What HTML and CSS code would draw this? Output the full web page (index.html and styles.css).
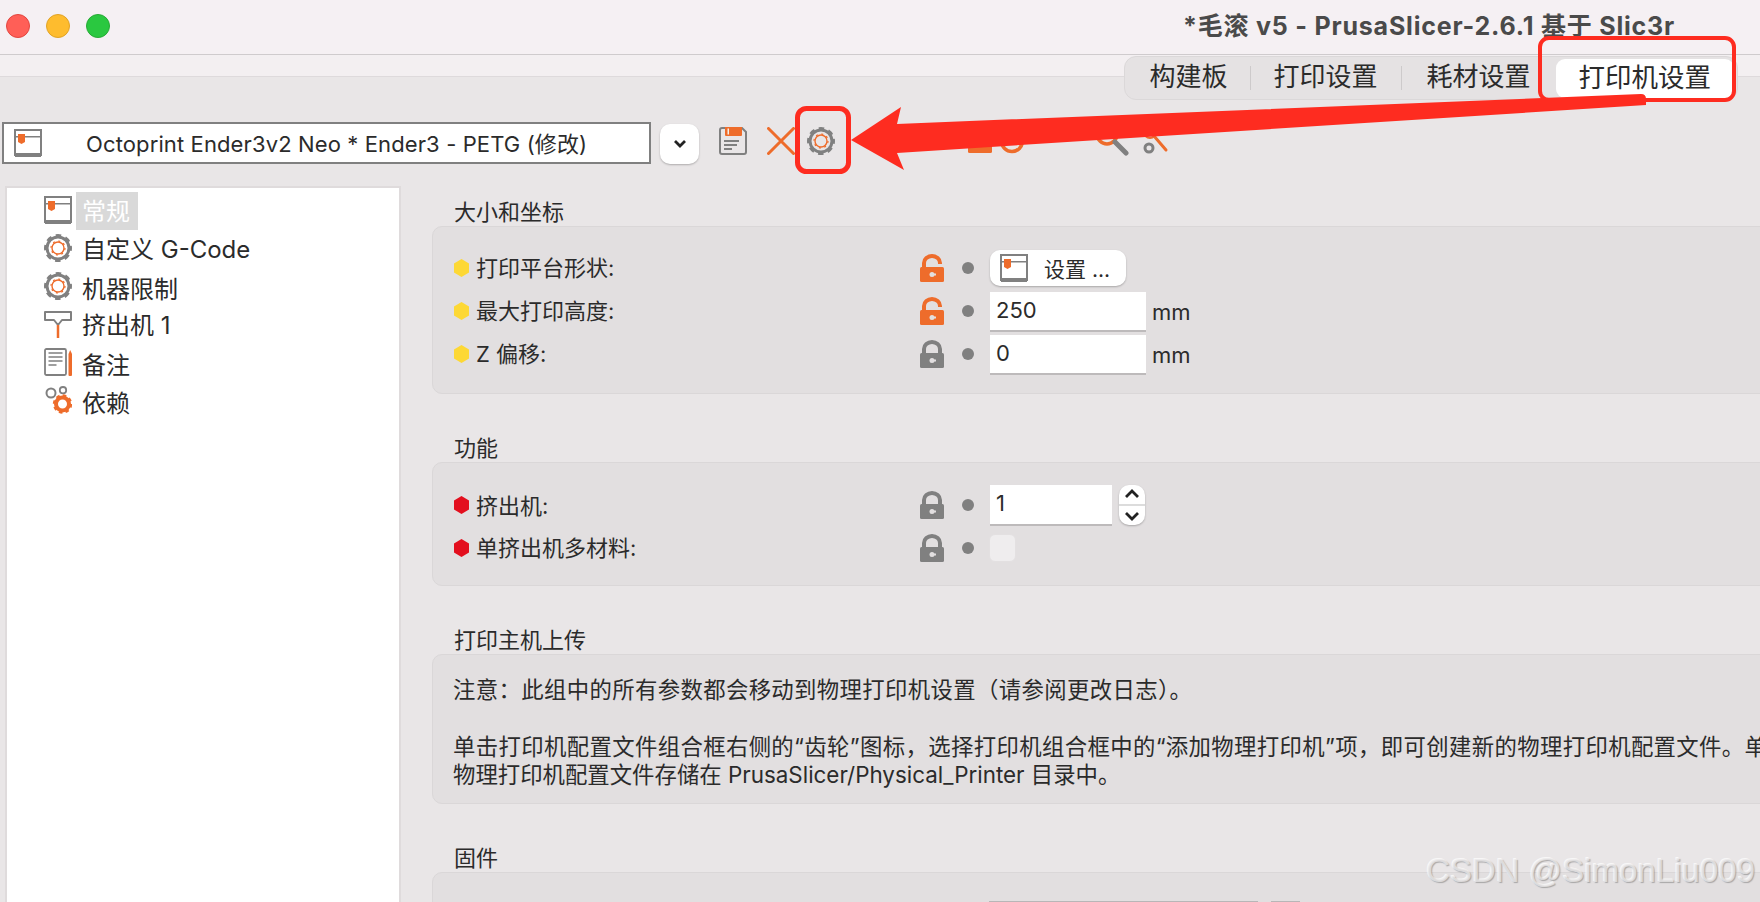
FILE: index.html
```html
<!DOCTYPE html>
<html lang="zh-CN">
<head>
    <meta charset="UTF-8">
    <title>PrusaSlicer</title>
    <link rel="stylesheet" href="styles.css">
</head>
<body>
    <svg class="sprite" width="0" height="0">
        <symbol id="i-printer" viewBox="0 0 28 28">
            <rect x="1" y="1" width="26" height="25" fill="none" stroke="#808080" stroke-width="2"/>
            <path d="M1 24h26v4H1zM2 7h25v1.500H2z" fill="#808080"/>
            <path d="M4 5h7v8l-3.500 2L4 13z" fill="#ee6c2b"/>
        </symbol>
        <symbol id="i-gear" viewBox="0 0 28 28">
            <circle cx="14" cy="14" r="11" fill="none" stroke="#808080" stroke-width="3"/>
            <circle cx="14" cy="14" r="12.700" fill="none" stroke="#808080" stroke-width="2.600" stroke-dasharray="5.500 4.480" stroke-dashoffset="2.700"/>
            <circle cx="14" cy="14" r="6" fill="none" stroke="#ee6c2b" stroke-width="1.400"/>
            <circle cx="14" cy="14" r="7" fill="none" stroke="#ee6c2b" stroke-width="1.200" stroke-dasharray="2 3.500"/>
        </symbol>
        <symbol id="i-extruder" viewBox="0 0 28 28">
            <path d="M1 2h26v8H18l-4 5-4-5H1z" fill="none" stroke="#808080" stroke-width="2" stroke-linejoin="round"/>
            <path d="M14 15v13" stroke="#ee6c2b" stroke-width="2.500"/>
        </symbol>
        <symbol id="i-note" viewBox="0 0 28 28">
            <rect x="1" y="1" width="21" height="26" rx="1.500" fill="none" stroke="#808080" stroke-width="1.800"/>
            <path d="M4.500 5h14M4.500 9h14M4.500 13h14M4.500 17h8" stroke="#808080" stroke-width="1.600"/>
            <path d="M24.500 6l1.700-4 1.800 4v21a1 1 0 0 1-1 1h-1.500a1 1 0 0 1-1-1z" fill="#ee6c2b"/>
        </symbol>
        <symbol id="i-deps" viewBox="0 0 28 28">
            <circle cx="7" cy="7" r="4.500" fill="none" stroke="#808080" stroke-width="2"/>
            <circle cx="19" cy="4.200" r="3.200" fill="none" stroke="#808080" stroke-width="1.800"/>
            <circle cx="18.500" cy="18" r="6.500" fill="none" stroke="#ee6c2b" stroke-width="4"/>
            <circle cx="18.500" cy="18" r="8.700" fill="none" stroke="#ee6c2b" stroke-width="2" stroke-dasharray="3.600 3.230"/>
        </symbol>
        <symbol id="i-lock" viewBox="0 0 24 28">
            <path d="M4 14V9a8 7 0 0 1 16 0v5" fill="none" stroke="currentColor" stroke-width="4"/>
            <rect y="13" width="24" height="15" rx="1.500" fill="currentColor"/>
            <circle cx="12" cy="20.500" r="2.500" fill="#e2dfe0"/>
            <path d="M12 19.500h4v2h-4z" fill="#e2dfe0"/>
        </symbol>
        <symbol id="i-unlock" viewBox="0 0 24 28">
            <path d="M4 14V9a8 7 0 0 1 16 0v1" fill="none" stroke="currentColor" stroke-width="4"/>
            <rect y="13" width="24" height="15" rx="1.500" fill="currentColor"/>
            <circle cx="12" cy="20.500" r="2.500" fill="#e2dfe0"/>
            <path d="M12 19.500h4v2h-4z" fill="#e2dfe0"/>
        </symbol>
        <symbol id="i-hex" viewBox="0 0 15 18">
            <path d="M7.500 0L15 4.500v9L7.500 18 0 13.500v-9z" fill="currentColor"/>
        </symbol>
    </svg>

    <header class="titlebar">
        <span class="light light-red"></span>
        <span class="light light-yellow"></span>
        <span class="light light-green"></span>
        <div class="app-title">*毛滚 v5 - PrusaSlicer-2.6.1 基于 Slic3r</div>
    </header>

    <div class="tabbar">
        <nav class="tabs">
            <div class="tab tab-first">构建板</div>
            <span class="tab-sep"></span>
            <div class="tab tab-second">打印设置</div>
            <span class="tab-sep"></span>
            <div class="tab">耗材设置</div>
            <div class="tab tab-active">打印机设置</div>
        </nav>
    </div>

    <div class="toolbar">
        <div class="combo">
            <svg class="combo-icon"><use href="#i-printer"/></svg>
            <span class="combo-text">Octoprint Ender3v2 Neo * Ender3 - PETG (修改)</span>
        </div>
        <div class="combo-btn">
            <svg width="14" height="10" viewBox="0 0 14 10"><path d="M2 2l5 5 5-5" fill="none" stroke="#222" stroke-width="2.800"/></svg>
        </div>
        <svg class="tool tool-save" viewBox="0 0 28 28">
            <path d="M3 1h20l4 4v20a2 2 0 0 1-2 2H3a2 2 0 0 1-2-2V3a2 2 0 0 1 2-2z" fill="none" stroke="#808080" stroke-width="2"/>
            <path d="M6 0h17v8a1 1 0 0 1-1 1H7a1 1 0 0 1-1-1z" fill="#ee6c2b"/>
            <path d="M8.500 1.500h1.500v6H8.500z" fill="#f4efe9"/>
            <path d="M5 14h15M5 18h13M5 22h8" stroke="#808080" stroke-width="1.800"/>
        </svg>
        <svg class="tool tool-close" viewBox="0 0 28 28">
            <path d="M1.500 1.500l25 25M26.500 1.500l-25 25" stroke="#ee6c2b" stroke-width="3" stroke-linecap="round"/>
        </svg>
        <svg class="tool tool-gear"><use href="#i-gear"/></svg>
        <svg class="tool tool-swap" viewBox="0 0 56 28">
            <rect x="0" y="4" width="24" height="22" rx="1.500" fill="#ee6c2b"/>
            <circle cx="44" cy="14" r="10.500" fill="none" stroke="#ee6c2b" stroke-width="3.500"/>
        </svg>
        <svg class="tool tool-find" viewBox="0 0 36 34">
            <circle cx="12" cy="12" r="10" fill="none" stroke="#ee6c2b" stroke-width="3.500"/>
            <path d="M20 20l11 11" stroke="#808080" stroke-width="5" stroke-linecap="round"/>
        </svg>
        <svg class="tool tool-wrench" viewBox="0 0 30 34">
            <circle cx="9" cy="10" r="6" fill="none" stroke="#ee6c2b" stroke-width="2"/>
            <path d="M13 14l12 14" stroke="#ee6c2b" stroke-width="3" stroke-linecap="round"/>
            <circle cx="8" cy="26" r="4" fill="none" stroke="#808080" stroke-width="3"/>
            <circle cx="24" cy="8" r="3.500" fill="none" stroke="#808080" stroke-width="3"/>
        </svg>
    </div>

    <main class="main">
        <aside class="tree">
            <div class="tree-row">
                <svg class="tree-icon"><use href="#i-printer"/></svg>
                <span class="tree-label tree-selected">常规</span>
            </div>
            <div class="tree-row">
                <svg class="tree-icon"><use href="#i-gear"/></svg>
                <span class="tree-label">自定义 G-Code</span>
            </div>
            <div class="tree-row">
                <svg class="tree-icon"><use href="#i-gear"/></svg>
                <span class="tree-label tree-low">机器限制</span>
            </div>
            <div class="tree-row">
                <svg class="tree-icon"><use href="#i-extruder"/></svg>
                <span class="tree-label">挤出机 1</span>
            </div>
            <div class="tree-row">
                <svg class="tree-icon"><use href="#i-note"/></svg>
                <span class="tree-label tree-lower">备注</span>
            </div>
            <div class="tree-row">
                <svg class="tree-icon"><use href="#i-deps"/></svg>
                <span class="tree-label tree-lower">依赖</span>
            </div>
        </aside>

        <section class="content">
            <div class="group">
                <div class="group-title">大小和坐标</div>
                <div class="group-box box-size">
                    <div class="row">
                        <div class="row-label"><svg class="hex hex-yellow"><use href="#i-hex"/></svg>打印平台形状:</div>
                        <svg class="lock lock-open"><use href="#i-unlock"/></svg>
                        <span class="dot"></span>
                        <div class="set-btn"><svg class="set-icon"><use href="#i-printer"/></svg>设置 ...</div>
                    </div>
                    <div class="row">
                        <div class="row-label"><svg class="hex hex-yellow"><use href="#i-hex"/></svg>最大打印高度:</div>
                        <svg class="lock lock-open"><use href="#i-unlock"/></svg>
                        <span class="dot"></span>
                        <div class="field"><input class="num" type="text" value="250"><span class="unit">mm</span></div>
                    </div>
                    <div class="row">
                        <div class="row-label"><svg class="hex hex-yellow"><use href="#i-hex"/></svg>Z 偏移:</div>
                        <svg class="lock"><use href="#i-lock"/></svg>
                        <span class="dot"></span>
                        <div class="field"><input class="num" type="text" value="0"><span class="unit">mm</span></div>
                    </div>
                </div>
            </div>

            <div class="group">
                <div class="group-title">功能</div>
                <div class="group-box box-func">
                    <div class="row">
                        <div class="row-label"><svg class="hex hex-red"><use href="#i-hex"/></svg>挤出机:</div>
                        <svg class="lock"><use href="#i-lock"/></svg>
                        <span class="dot"></span>
                        <div class="field field-spin">
                            <input class="num num-short" type="text" value="1">
                            <div class="spin">
                                <svg width="16" height="10" viewBox="0 0 16 10"><path d="M2 8l6-6 6 6" fill="none" stroke="#222" stroke-width="2.800"/></svg>
                                <span class="spin-line"></span>
                                <svg width="16" height="10" viewBox="0 0 16 10"><path d="M2 2l6 6 6-6" fill="none" stroke="#222" stroke-width="2.800"/></svg>
                            </div>
                        </div>
                    </div>
                    <div class="row row-short">
                        <div class="row-label"><svg class="hex hex-red"><use href="#i-hex"/></svg>单挤出机多材料:</div>
                        <svg class="lock"><use href="#i-lock"/></svg>
                        <span class="dot"></span>
                        <span class="check"></span>
                    </div>
                </div>
            </div>

            <div class="group">
                <div class="group-title">打印主机上传</div>
                <div class="group-box box-host">
                    <p class="note note-wide">注意&#xFF1A;此组中的所有参数都会移动到物理打印机设置&#xFF08;请参阅更改日志&#xFF09;。</p>
                    <p class="note note-wide note-gap">单击打印机配置文件组合框右侧的“齿轮”图标&#xFF0C;选择打印机组合框中的“添加物理打印机”项&#xFF0C;即可创建新的物理打印机配置文件。单</p>
                    <p class="note">物理打印机配置文件存储在 PrusaSlicer/Physical_Printer 目录中。</p>
                </div>
            </div>

            <div class="group">
                <div class="group-title">固件</div>
                <div class="group-box box-firmware">
                    <div class="fw-line"></div>
                    <div class="fw-stub"></div>
                </div>
            </div>
        </section>
    </main>

    <!-- red annotations drawn over the screenshot -->
    <svg class="marks" viewBox="0 0 1760 902">
        <rect x="1540" y="38" width="194" height="62" rx="9" fill="none" stroke="#fe2c20" stroke-width="4"/>
        <rect x="797.500" y="108.500" width="51" height="63" rx="9" fill="none" stroke="#fe2c20" stroke-width="5"/>
        <path d="M851 140L901 107 897 124 1641 94Q1646 94 1646 99V105L897 153 904 170z" fill="#fe2c20"/>
    </svg>

    <div class="watermark">CSDN @SimonLiu009</div>
</body>
</html>
```

FILE: styles.css
```css
* {
    box-sizing: border-box;
}
html, body {
    margin: 0;
    height: 902px;
    overflow: hidden;
}
body {
    position: relative;
    display: flex;
    flex-direction: column;
    background-color: #e9e6e7;
    color: #2b2b2b;
    font-family: Inter, "Noto Sans CJK SC", sans-serif;
}
.sprite {
    position: absolute;
}

/* window title */
.titlebar {
    display: flex;
    align-items: center;
    gap: 16px;
    height: 55px;
    padding-left: 6px;
    padding-bottom: 3px;
    background-color: #f5f0f3;
    border-bottom: 1px solid #cfcbcd;
}
.light {
    width: 24px;
    height: 24px;
    border-radius: 50%;
}
.light-red {
    background-color: #ff5f57;
    border: 1px solid #e2463f;
}
.light-yellow {
    background-color: #febc2e;
    border: 1px solid #e1a325;
}
.light-green {
    background-color: #2ac840;
    border: 1px solid #27aa35;
}
.app-title {
    margin-left: auto;
    margin-right: 85px;
    margin-bottom: 3px;
    font-size: 25px;
    font-weight: bold;
    letter-spacing: 0.8px;
    color: #4a4a4a;
}

/* tabs */
.tabbar {
    display: flex;
    justify-content: flex-end;
    height: 22px;
    padding-right: 22px;
    background-color: #f3eff1;
    border-bottom: 1px solid #dedadc;
}
.tabs {
    display: flex;
    align-items: center;
    flex: none;
    height: 44px;
    margin-top: 1px;
    padding: 0 3px 0 0;
    background-color: #e5e2e3;
    border: 1px solid #dbd8d9;
    border-radius: 12px;
    font-size: 26px;
}
.tab {
    height: 39px;
    line-height: 36px;
    padding: 0 24px;
}
.tab-first {
    padding-right: 23px;
}
.tab-second {
    padding-left: 22px;
}
.tab-sep {
    width: 1px;
    height: 24px;
    background-color: #cdcacb;
}
.tab-active {
    margin-left: 1px;
    padding: 0 23px;
    font-size: 26.500px;
    background-color: #fff;
    border-radius: 9px;
}

/* preset row */
.toolbar {
    display: flex;
    align-items: flex-start;
    flex: none;
    height: 109px;
    padding: 45px 0 0 2px;
}
.combo {
    display: flex;
    align-items: center;
    width: 649px;
    height: 42px;
    background-color: #fff;
    border: 2px solid #808080;
    font-size: 22px;
    color: #2b2b2b;
}
.combo-icon {
    flex: none;
    width: 28px;
    height: 28px;
    margin: 0 44px 0 10px;
}
.combo-text {
    padding-bottom: 3px;
    letter-spacing: 0.12px;
    white-space: nowrap;
}
.combo-btn {
    display: flex;
    align-items: center;
    justify-content: center;
    width: 39px;
    height: 40px;
    margin: 2px 0 0 9px;
    background-color: #fff;
    border-radius: 10px;
    box-shadow: 0 1px 2px rgba(0, 0, 0, 0.25);
}
.tool {
    flex: none;
    width: 28px;
    height: 28px;
    margin-top: 5px;
}
.tool-save {
    margin-left: 20px;
}
.tool-close {
    margin-left: 20px;
}
.tool-gear {
    margin-left: 12px;
}
.tool-swap {
    width: 56px;
    margin-left: 133px;
}
.tool-find {
    width: 36px;
    height: 34px;
    margin-left: 71px;
    margin-top: 0;
}
.tool-wrench {
    width: 30px;
    height: 34px;
    margin-left: 10px;
    margin-top: 0;
}

/* main area */
.main {
    display: flex;
    flex: 1;
    min-height: 0;
    overflow: hidden;
}
.tree {
    flex: none;
    width: 396px;
    margin-left: 5px;
    padding: 8px 0 0 37px;
    background-color: #fff;
    border: 2px solid #dfdbdc;
    border-bottom: none;
    font-size: 24px;
}
.tree-row {
    display: flex;
    align-items: flex-start;
    gap: 4px;
    height: 38px;
}
.tree-icon {
    flex: none;
    width: 28px;
    height: 28px;
}
.tree-label {
    margin-top: 2px;
    padding: 0 6px;
    line-height: 28px;
    white-space: nowrap;
}
.tree-selected {
    margin-top: -4px;
    padding: 6px 8px 4px 6px;
    background-color: #d9d9d9;
    color: #fff;
}
.tree-low {
    margin-top: 4px;
}
.tree-lower {
    margin-top: 4px;
}

.content {
    display: flex;
    flex: 1;
    flex-direction: column;
    gap: 42px;
    min-width: 0;
    margin-left: 31px;
    padding-top: 14px;
}
.group-title {
    height: 26px;
    line-height: 24px;
    margin-left: 22px;
    font-size: 22px;
}
.group-box {
    padding-left: 21px;
    margin-right: -12px;
    background-color: #e2dfe0;
    border: 1px solid #dad7d8;
    border-radius: 10px;
    font-size: 22px;
}
.box-size {
    height: 168px;
    padding-top: 19px;
}
.box-func {
    height: 124px;
    padding-top: 20px;
}
.box-host {
    height: 150px;
    padding-top: 21px;
    padding-left: 20px;
}
.box-firmware {
    display: flex;
    gap: 13px;
    height: 60px;
    padding: 28px 0 0 556px;
}
.row {
    display: grid;
    grid-template-columns: 466px 42px 28px auto;
    align-items: center;
    height: 43px;
}
.row-short {
    height: 41px;
}
.box-func .row:first-child {
    height: 44px;
}
.row-label {
    display: flex;
    align-items: center;
    gap: 7px;
    padding-bottom: 3px;
    white-space: nowrap;
}
.hex {
    flex: none;
    width: 15px;
    height: 18px;
    margin-top: 3px;
}
.hex-yellow {
    color: #fdd835;
}
.hex-red {
    color: #e30f1e;
}
.lock {
    width: 24px;
    height: 28px;
    color: #808080;
}
.lock-open {
    color: #ee6c2b;
}
.dot {
    width: 12px;
    height: 12px;
    border-radius: 50%;
    background-color: #808080;
}
.set-btn {
    display: flex;
    align-items: center;
    width: 136px;
    height: 36px;
    padding-left: 10px;
    font-size: 21px;
    background-color: #fff;
    border-radius: 10px;
    box-shadow: 0 1px 2px rgba(0, 0, 0, 0.25);
}
.set-icon {
    flex: none;
    width: 28px;
    height: 28px;
    margin-right: 16px;
}
.field {
    display: flex;
    align-items: flex-end;
    margin-top: 3px;
}
.num {
    width: 156px;
    height: 40px;
    padding: 0 0 2px 6px;
    background-color: #fff;
    border: none;
    border-bottom: 2px solid #bdbabb;
    font: 22px Inter, sans-serif;
    color: #2b2b2b;
}
.num-short {
    width: 122px;
    height: 41px;
}
.unit {
    margin-left: 6px;
    line-height: 39px;
}
.field-spin {
    gap: 7px;
    align-items: center;
    margin-top: 0;
}
.spin {
    display: flex;
    flex-direction: column;
    align-items: center;
    justify-content: space-between;
    width: 26px;
    height: 40px;
    padding: 4px 0;
    background-color: #fff;
    border-radius: 10px;
    box-shadow: 0 1px 2px rgba(0, 0, 0, 0.25);
}
.spin-line {
    width: 100%;
    height: 2px;
    background-color: #dcdcdc;
}
.check {
    width: 27px;
    height: 28px;
    margin-left: -1px;
    background-color: #efedee;
    border: 1px solid #e3e0e1;
    border-radius: 6px;
}
.note {
    margin: 0;
    font-size: 22.400px;
    line-height: 28px;
    white-space: nowrap;
}
.note-wide {
    letter-spacing: 0.35px;
}
.note-gap {
    margin-top: 29px;
}
.fw-line {
    width: 269px;
    height: 1px;
    background-color: #b8b6b7;
}
.fw-stub {
    width: 29px;
    height: 1px;
    background-color: #b8b6b7;
}

/* overlays */
.marks {
    position: absolute;
    left: 0;
    top: 0;
    width: 1760px;
    height: 902px;
    pointer-events: none;
}
.watermark {
    position: absolute;
    right: 5px;
    top: 854px;
    font-family: "Liberation Sans", sans-serif;
    font-size: 33px;
    line-height: 34px;
    white-space: nowrap;
    color: rgba(235, 233, 234, 0.75);
    text-shadow: 1px 1px 1px rgba(120, 120, 120, 0.55), -1px -1px 0 rgba(255, 255, 255, 0.7);
}
```
